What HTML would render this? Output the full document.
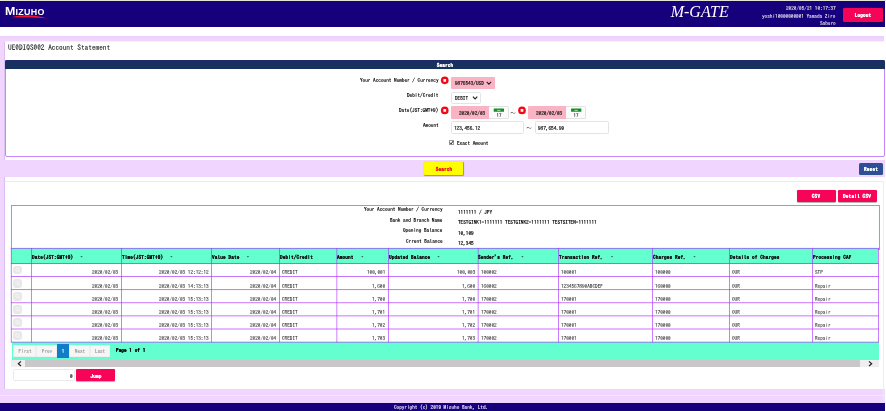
<!DOCTYPE html>
<html lang="en"><head><meta charset="utf-8"><title>UE0DIQS002 Account Statement</title>
<style>
html,body{margin:0;padding:0;background:#fff;}
body{width:886px;height:411px;position:relative;overflow:hidden;font-family:"IPAGothic","Liberation Mono",monospace;}
#w{position:absolute;left:0;top:0;width:886px;height:411px;will-change:transform;}
.a{position:absolute;box-sizing:content-box;}
.t{white-space:pre;font-family:"IPAGothic","Liberation Mono",monospace;-webkit-text-stroke:0.17px currentColor;transform:rotate(0.02deg);}
svg{display:block;overflow:visible;}
</style></head><body><div id="w">
<div class="a" style="left:0.00px;top:0.00px;width:886.00px;height:1.00px;background:#e4e4d6;"></div>
<div class="a" style="left:0.00px;top:1.00px;width:885.00px;height:25.80px;background:#17007c;"></div>
<div class="a" style="left:5.1px;top:4.8px;color:#fff;font-family:'Liberation Sans',sans-serif;font-weight:bold;font-size:8.9px;line-height:12px;letter-spacing:0.34px;white-space:pre"><span style="font-size:11.3px;display:inline-block;transform:scaleX(1.1);transform-origin:0 50%;margin-right:0.55px">M</span>IZUHO</div>
<svg class="a" style="left:10px;top:13px" width="40" height="9" viewBox="-1.20 -1.10 40 9"><path d="M0.3 3.1 C 9 0.3, 23 0.0, 36 4.4 C 23 3.0, 10 3.3, 0.3 3.1 Z" fill="#f0103a"/></svg>
<div class="a" style="left:670.7px;top:2.4px;color:#fff;font-family:'Liberation Serif',serif;font-style:italic;font-size:16px;line-height:19px;white-space:pre">M-GATE</div>
<div class="a t " style="top:4.63px;font-size:5.24px;line-height:6.24px;color:#fff;right:50.60px;-webkit-text-stroke:0.06px #fff;">2020/05/21 10:17:37</div>
<div class="a t " style="top:12.63px;font-size:5.24px;line-height:6.24px;color:#fff;right:50.60px;-webkit-text-stroke:0.06px #fff;">yoshi10000000001 Yamada Ziro</div>
<div class="a t " style="top:20.43px;font-size:5.24px;line-height:6.24px;color:#fff;right:50.60px;-webkit-text-stroke:0.06px #fff;">Saburo</div>
<div class="a" style="left:843.30px;top:8.30px;width:39.40px;height:13.40px;background:#f70459;border-radius:1.2px;box-shadow:0 0.5px 0.8px rgba(0,0,0,.3);"></div>
<div class="a t " style="top:12.08px;font-size:5.24px;line-height:6.24px;color:#fff;font-weight:bold;-webkit-text-stroke:0.14px currentColor;letter-spacing:0.15px;left:763.00px;width:200px;text-align:center;">Logout</div>
<div class="a" style="left:0.00px;top:36.10px;width:884.00px;height:367.30px;background:#efd5ff;"></div>
<div class="a" style="left:882.00px;top:389.30px;width:3.00px;height:14.10px;background:#f1dcff;"></div>
<div class="a" style="left:4.60px;top:41.00px;width:880.40px;height:348.30px;background:#fff;"></div>
<div class="a" style="left:4.60px;top:41.00px;width:879.40px;height:1.00px;background:#f8eeff;"></div>
<div class="a" style="left:0.00px;top:36.00px;width:884.00px;height:2.00px;background:#ecd0fd;"></div>
<div class="a" style="left:4.10px;top:42.00px;width:0.60px;height:347.30px;background:#dcc0f2;"></div>
<div class="a" style="left:0.00px;top:395.00px;width:885.00px;height:1.00px;background:#f5e4ff;"></div>
<div class="a t " style="top:44.15px;font-size:7.3px;line-height:8.3px;color:#1a1a1a;left:7.80px;-webkit-text-stroke:0.1px #1a1a1a;">UE0DIQS002 Account Statement</div>
<div class="a" style="left:4.6px;top:60px;width:878.7px;height:95.4px;border:0.9px solid #c986fa;border-radius:2px;background:#fff;box-sizing:content-box"></div>
<div class="a" style="left:4.70px;top:60.00px;width:880.30px;height:8.60px;background:#16325d;border-radius:1.8px 1.8px 0 0;box-shadow:inset 0 0.6px 0 #2a1f80;"></div>
<div class="a t " style="top:61.78px;font-size:5.24px;line-height:6.24px;color:#fff;font-weight:bold;-webkit-text-stroke:0.14px currentColor;letter-spacing:0.12px;left:344.90px;width:200px;text-align:center;">Search</div>
<div class="a t " style="top:76.68px;font-size:5.24px;line-height:6.24px;color:#000;right:447.00px;">Your Account Number / Currency</div>
<div class="a t " style="top:92.08px;font-size:5.24px;line-height:6.24px;color:#000;right:447.50px;">Debit/Credit</div>
<div class="a t " style="top:107.08px;font-size:5.24px;line-height:6.24px;color:#000;right:447.60px;">Date(JST:GMT+9)</div>
<div class="a t " style="top:121.88px;font-size:5.24px;line-height:6.24px;color:#000;right:447.60px;">Amount</div>
<svg class="a" style="left:439px;top:75px" width="11" height="11" viewBox="-1.75 -1.30 11 11"><circle cx="4" cy="4" r="3.85" fill="#f00a14"/><rect x="2.65" y="2.65" width="2.7" height="2.7" rx="0.3" fill="#fff"/></svg>
<svg class="a" style="left:439px;top:105px" width="11" height="11" viewBox="-1.75 -1.45 11 11"><circle cx="4" cy="4" r="3.85" fill="#f00a14"/><rect x="2.65" y="2.65" width="2.7" height="2.7" rx="0.3" fill="#fff"/></svg>
<svg class="a" style="left:517px;top:105px" width="10" height="11" viewBox="-1.00 -1.45 10 11"><circle cx="4" cy="4" r="3.85" fill="#f00a14"/><rect x="2.65" y="2.65" width="2.7" height="2.7" rx="0.3" fill="#fff"/></svg>
<div class="a" style="left:451.20px;top:76.80px;width:43.60px;height:12.20px;background:#f9b3c3;border-radius:1px;"></div>
<div class="a t " style="top:79.98px;font-size:5.24px;line-height:6.24px;color:#111;left:455.00px;">9876543/USD</div>
<svg class="a" style="left:485px;top:80px" width="8" height="7" viewBox="-1.20 -1.10 8 7"><path d="M0.5 0.7 L2.7 3 L4.9 0.7" fill="none" stroke="#222" stroke-width="1.1"/></svg>
<div class="a" style="box-sizing:border-box;left:451.20px;top:91.50px;width:30.10px;height:12.70px;border:1px solid #e4e4e4;background:#fff;border-radius:1.5px;"></div>
<div class="a t " style="top:94.88px;font-size:5.24px;line-height:6.24px;color:#111;left:455.00px;">DEBIT</div>
<svg class="a" style="left:471px;top:95px" width="8" height="6" viewBox="-1.40 -1.00 8 6"><path d="M0.5 0.7 L2.7 3 L4.9 0.7" fill="none" stroke="#222" stroke-width="1.1"/></svg>
<div class="a" style="left:451.20px;top:106.40px;width:37.70px;height:12.70px;background:#f9b3c3;border-radius:1px 0 0 1px;"></div>
<div class="a t " style="top:109.98px;font-size:5.24px;line-height:6.24px;color:#111;right:400.70px;">2020/02/03</div>
<div class="a" style="box-sizing:border-box;left:488.90px;top:106.40px;width:19.70px;height:12.90px;border:1px solid #e2e2e2;background:#fbfbfb;border-left:none;border-radius:0 1.5px 1.5px 0;"></div>
<svg class="a" style="left:492px;top:107px" width="13" height="6" viewBox="-1.70 -1.60 13 6"><rect x="0" y="0" width="10.3" height="3.1" rx="0.3" fill="#128f22"/><rect x="3.4" y="1.3" width="3.4" height="0.8" fill="#d4f0d8"/></svg>
<div class="a t " style="top:112.65px;font-size:4.9px;line-height:5.9px;color:#333;font-weight:bold;-webkit-text-stroke:0.14px currentColor;left:398.80px;width:200px;text-align:center;-webkit-text-stroke:0;">17</div>
<div class="a t " style="top:109.50px;font-size:5.6px;line-height:6.6px;color:#222;left:413.40px;width:200px;text-align:center;">～</div>
<div class="a" style="left:527.80px;top:106.40px;width:38.60px;height:12.70px;background:#f9b3c3;border-radius:1px 0 0 1px;"></div>
<div class="a t " style="top:109.98px;font-size:5.24px;line-height:6.24px;color:#111;right:323.60px;">2020/02/03</div>
<div class="a" style="box-sizing:border-box;left:566.40px;top:106.40px;width:19.40px;height:12.90px;border:1px solid #e2e2e2;background:#fbfbfb;border-left:none;border-radius:0 1.5px 1.5px 0;"></div>
<svg class="a" style="left:570px;top:107px" width="13" height="6" viewBox="-1.05 -1.60 13 6"><rect x="0" y="0" width="10.3" height="3.1" rx="0.3" fill="#128f22"/><rect x="3.4" y="1.3" width="3.4" height="0.8" fill="#d4f0d8"/></svg>
<div class="a t " style="top:112.65px;font-size:4.9px;line-height:5.9px;color:#333;font-weight:bold;-webkit-text-stroke:0.14px currentColor;left:476.15px;width:200px;text-align:center;-webkit-text-stroke:0;">17</div>
<div class="a" style="box-sizing:border-box;left:451.10px;top:121.30px;width:72.80px;height:13.20px;border:1px solid #e4e4e4;background:#fff;border-radius:1.5px;"></div>
<div class="a t " style="top:124.58px;font-size:5.24px;line-height:6.24px;color:#111;left:454.10px;">123,456.12</div>
<div class="a t " style="top:124.70px;font-size:5.6px;line-height:6.6px;color:#222;left:428.90px;width:200px;text-align:center;">～</div>
<div class="a" style="box-sizing:border-box;left:535.20px;top:121.30px;width:73.40px;height:13.20px;border:1px solid #e4e4e4;background:#fff;border-radius:1.5px;"></div>
<div class="a t " style="top:124.58px;font-size:5.24px;line-height:6.24px;color:#111;left:538.10px;">987,654.99</div>
<div class="a" style="box-sizing:border-box;left:448.90px;top:140.20px;width:5.00px;height:5.10px;border:1px solid #9a9a9a;background:#fff;"></div>
<svg class="a" style="left:448px;top:139px" width="7" height="7" viewBox="-1.20 -1.40 7 7"><path d="M0.8 2.3 L1.9 3.5 L3.9 0.7" fill="none" stroke="#111" stroke-width="0.95"/></svg>
<div class="a t " style="top:139.88px;font-size:5.24px;line-height:6.24px;color:#000;left:456.80px;">Exact Amount</div>
<div class="a" style="left:4.60px;top:160.00px;width:880.40px;height:16.50px;background:#efd5ff;"></div>
<div class="a" style="left:0.00px;top:160.00px;width:4.60px;height:16.50px;background:#efd5ff;"></div>
<div class="a" style="left:424.30px;top:162.20px;width:39.20px;height:12.50px;background:#ffff00;border-radius:1px;box-shadow:0.4px 0.6px 0.8px rgba(120,110,0,.6);"></div>
<div class="a t " style="top:166.08px;font-size:5.24px;line-height:6.24px;color:#f0141e;font-weight:bold;-webkit-text-stroke:0.14px currentColor;letter-spacing:0.12px;left:344.30px;width:200px;text-align:center;">Search</div>
<div class="a" style="left:859.30px;top:162.60px;width:23.80px;height:12.40px;background:#2d4f93;border-radius:1.5px;"></div>
<div class="a t " style="top:165.88px;font-size:5.24px;line-height:6.24px;color:#fff;font-weight:bold;-webkit-text-stroke:0.14px currentColor;letter-spacing:0.15px;left:771.30px;width:200px;text-align:center;">Reset</div>
<div class="a" style="left:4.60px;top:180.60px;width:878.80px;height:0.70px;background:#ececec;"></div>
<div class="a" style="left:883.30px;top:181.00px;width:0.60px;height:208.30px;background:#efefef;"></div>
<div class="a" style="left:796.50px;top:189.50px;width:39.30px;height:12.40px;background:#f70459;border-radius:1.2px;box-shadow:0 0.5px 0.8px rgba(0,0,0,.3);"></div>
<div class="a t " style="top:192.88px;font-size:5.24px;line-height:6.24px;color:#fff;font-weight:bold;-webkit-text-stroke:0.14px currentColor;letter-spacing:0.18px;left:716.30px;width:200px;text-align:center;">CSV</div>
<div class="a" style="left:837.50px;top:189.50px;width:39.30px;height:12.40px;background:#f70459;border-radius:1.2px;box-shadow:0 0.5px 0.8px rgba(0,0,0,.3);"></div>
<div class="a t " style="top:192.88px;font-size:5.24px;line-height:6.24px;color:#fff;font-weight:bold;-webkit-text-stroke:0.14px currentColor;letter-spacing:0.18px;left:757.30px;width:200px;text-align:center;">Detail CSV</div>
<div class="a" style="left:10.7px;top:204.7px;width:866.9px;height:43px;border:0.9px solid #c97cf9;background:#fff"></div>
<div class="a t " style="top:206.08px;font-size:5.24px;line-height:6.24px;color:#000;right:443.80px;">Your Account Number / Currency</div>
<div class="a t " style="top:208.78px;font-size:5.24px;line-height:6.24px;color:#000;left:458.40px;">1111111 / JPY</div>
<div class="a t " style="top:216.64px;font-size:5.24px;line-height:6.24px;color:#000;right:443.80px;">Bank and Branch Name</div>
<div class="a t " style="top:219.34px;font-size:5.24px;line-height:6.24px;color:#000;left:458.40px;">TESTGINK1-1111111 TESTGINK2-1111111 TESTSITEN-1111111</div>
<div class="a t " style="top:227.20px;font-size:5.24px;line-height:6.24px;color:#000;right:443.80px;">Opening Balance</div>
<div class="a t " style="top:229.90px;font-size:5.24px;line-height:6.24px;color:#000;left:458.40px;">10,109</div>
<div class="a t " style="top:237.76px;font-size:5.24px;line-height:6.24px;color:#000;right:443.80px;">Crrent Balance</div>
<div class="a t " style="top:240.46px;font-size:5.24px;line-height:6.24px;color:#000;left:458.40px;">12,345</div>
<div class="a" style="left:11.20px;top:248.25px;width:867.30px;height:15.30px;background:#63ffce;"></div>
<div class="a" style="left:11.50px;top:342.00px;width:867.60px;height:17.80px;background:#63ffce;"></div>
<svg class="a" style="left:0;top:240px" width="886" height="110" viewBox="0 240 886 110"><rect x="10.95" y="247.93" width="867.80" height="0.64" fill="#a828ff"/><rect x="10.95" y="263.23" width="867.80" height="0.64" fill="#a828ff"/><rect x="10.95" y="276.32" width="867.80" height="0.64" fill="#a828ff"/><rect x="10.95" y="289.41" width="867.80" height="0.64" fill="#a828ff"/><rect x="10.95" y="302.50" width="867.80" height="0.64" fill="#a828ff"/><rect x="10.95" y="315.59" width="867.80" height="0.64" fill="#a828ff"/><rect x="10.95" y="328.68" width="867.80" height="0.64" fill="#a828ff"/><rect x="10.95" y="341.77" width="867.80" height="0.64" fill="#a828ff"/><rect x="10.90" y="248.00" width="0.6" height="94.34" fill="#a828ff"/><rect x="31.30" y="248.00" width="0.6" height="94.34" fill="#a828ff"/><rect x="121.30" y="248.00" width="0.6" height="94.34" fill="#a828ff"/><rect x="211.20" y="248.00" width="0.6" height="94.34" fill="#a828ff"/><rect x="279.30" y="248.00" width="0.6" height="94.34" fill="#a828ff"/><rect x="336.60" y="248.00" width="0.6" height="94.34" fill="#a828ff"/><rect x="388.30" y="248.00" width="0.6" height="94.34" fill="#a828ff"/><rect x="477.80" y="248.00" width="0.6" height="94.34" fill="#a828ff"/><rect x="558.30" y="248.00" width="0.6" height="94.34" fill="#a828ff"/><rect x="652.40" y="248.00" width="0.6" height="94.34" fill="#a828ff"/><rect x="729.40" y="248.00" width="0.6" height="94.34" fill="#a828ff"/><rect x="812.20" y="248.00" width="0.6" height="94.34" fill="#a828ff"/><rect x="878.20" y="248.00" width="0.6" height="94.34" fill="#a828ff"/></svg>
<div class="a t " style="top:253.58px;font-size:5.24px;line-height:6.24px;color:#111;font-weight:bold;-webkit-text-stroke:0.14px currentColor;letter-spacing:0.13px;left:31.90px;">Date(JST:GMT+9)</div>
<svg class="a" style="left:79px;top:255px" width="5" height="4" viewBox="-1.40 -1.00 5 4"><path d="M0 0 L2.4 0 L1.2 1.5 Z" fill="#3a6a5a"/></svg>
<div class="a t " style="top:253.58px;font-size:5.24px;line-height:6.24px;color:#111;font-weight:bold;-webkit-text-stroke:0.14px currentColor;letter-spacing:0.13px;left:121.90px;">Time(JST:GMT+9)</div>
<svg class="a" style="left:169px;top:255px" width="5" height="4" viewBox="-1.20 -1.00 5 4"><path d="M0 0 L2.4 0 L1.2 1.5 Z" fill="#3a6a5a"/></svg>
<div class="a t " style="top:253.58px;font-size:5.24px;line-height:6.24px;color:#111;font-weight:bold;-webkit-text-stroke:0.14px currentColor;letter-spacing:0.13px;left:211.80px;">Value Date</div>
<svg class="a" style="left:245px;top:255px" width="6" height="4" viewBox="-1.70 -1.00 6 4"><path d="M0 0 L2.4 0 L1.2 1.5 Z" fill="#3a6a5a"/></svg>
<div class="a t " style="top:253.58px;font-size:5.24px;line-height:6.24px;color:#111;font-weight:bold;-webkit-text-stroke:0.14px currentColor;letter-spacing:0.13px;left:279.90px;">Debit/Credit</div>
<div class="a t " style="top:253.58px;font-size:5.24px;line-height:6.24px;color:#111;font-weight:bold;-webkit-text-stroke:0.14px currentColor;letter-spacing:0.13px;left:337.20px;">Amount</div>
<svg class="a" style="left:360px;top:255px" width="5" height="4" viewBox="-1.10 -1.00 5 4"><path d="M0 0 L2.4 0 L1.2 1.5 Z" fill="#3a6a5a"/></svg>
<div class="a t " style="top:253.58px;font-size:5.24px;line-height:6.24px;color:#111;font-weight:bold;-webkit-text-stroke:0.14px currentColor;letter-spacing:0.13px;left:388.90px;">Updated Balance</div>
<svg class="a" style="left:436px;top:255px" width="5" height="4" viewBox="-1.30 -1.00 5 4"><path d="M0 0 L2.4 0 L1.2 1.5 Z" fill="#3a6a5a"/></svg>
<div class="a t " style="top:253.58px;font-size:5.24px;line-height:6.24px;color:#111;font-weight:bold;-webkit-text-stroke:0.14px currentColor;letter-spacing:0.13px;left:478.40px;">Sender's Ref.</div>
<svg class="a" style="left:520px;top:255px" width="5" height="4" viewBox="-1.20 -1.00 5 4"><path d="M0 0 L2.4 0 L1.2 1.5 Z" fill="#3a6a5a"/></svg>
<div class="a t " style="top:253.58px;font-size:5.24px;line-height:6.24px;color:#111;font-weight:bold;-webkit-text-stroke:0.14px currentColor;letter-spacing:0.13px;left:558.90px;">Transaction Ref.</div>
<svg class="a" style="left:609px;top:255px" width="6" height="4" viewBox="-1.80 -1.00 6 4"><path d="M0 0 L2.4 0 L1.2 1.5 Z" fill="#3a6a5a"/></svg>
<div class="a t " style="top:253.58px;font-size:5.24px;line-height:6.24px;color:#111;font-weight:bold;-webkit-text-stroke:0.14px currentColor;letter-spacing:0.13px;left:653.00px;">Charges Ref.</div>
<svg class="a" style="left:692px;top:255px" width="5" height="4" viewBox="-1.30 -1.00 5 4"><path d="M0 0 L2.4 0 L1.2 1.5 Z" fill="#3a6a5a"/></svg>
<div class="a t " style="top:253.58px;font-size:5.24px;line-height:6.24px;color:#111;font-weight:bold;-webkit-text-stroke:0.14px currentColor;letter-spacing:0.13px;left:730.00px;">Details of Charges</div>
<div class="a t " style="top:253.58px;font-size:5.24px;line-height:6.24px;color:#111;font-weight:bold;-webkit-text-stroke:0.14px currentColor;letter-spacing:0.13px;left:812.80px;">Processing CAF</div>
<div class="a" style="left:13.4px;top:265.90px;width:9.1px;height:8.6px;border-radius:3px;background:#e8e8e8"></div>
<svg class="a" style="left:14px;top:266px" width="8" height="9" viewBox="-1.00 -1.30 8 9"><circle cx="2.4" cy="2.4" r="1.6" fill="none" stroke="#f8f8f8" stroke-width="0.8"/><path d="M3.6 3.6 L5.2 5.2" stroke="#f8f8f8" stroke-width="0.9"/></svg>
<div class="a t " style="top:269.48px;font-size:5.24px;line-height:6.24px;color:#1c1c1c;right:767.50px;-webkit-text-stroke:0.05px #1c1c1c;">2020/02/03</div>
<div class="a t " style="top:269.48px;font-size:5.24px;line-height:6.24px;color:#1c1c1c;right:677.60px;-webkit-text-stroke:0.05px #1c1c1c;">2020/02/03 12:12:12</div>
<div class="a t " style="top:269.48px;font-size:5.24px;line-height:6.24px;color:#1c1c1c;right:609.50px;-webkit-text-stroke:0.05px #1c1c1c;">2020/02/04</div>
<div class="a t " style="top:269.48px;font-size:5.24px;line-height:6.24px;color:#1c1c1c;left:282.35px;-webkit-text-stroke:0.05px #1c1c1c;">CREDIT</div>
<div class="a t " style="top:269.48px;font-size:5.24px;line-height:6.24px;color:#1c1c1c;right:500.50px;-webkit-text-stroke:0.05px #1c1c1c;">100,001</div>
<div class="a t " style="top:269.48px;font-size:5.24px;line-height:6.24px;color:#1c1c1c;right:411.00px;-webkit-text-stroke:0.05px #1c1c1c;">100,003</div>
<div class="a t " style="top:269.48px;font-size:5.24px;line-height:6.24px;color:#1c1c1c;left:480.85px;-webkit-text-stroke:0.05px #1c1c1c;">100002</div>
<div class="a t " style="top:269.48px;font-size:5.24px;line-height:6.24px;color:#1c1c1c;left:561.35px;-webkit-text-stroke:0.05px #1c1c1c;">100001</div>
<div class="a t " style="top:269.48px;font-size:5.24px;line-height:6.24px;color:#1c1c1c;left:655.45px;-webkit-text-stroke:0.05px #1c1c1c;">100000</div>
<div class="a t " style="top:269.48px;font-size:5.24px;line-height:6.24px;color:#1c1c1c;left:732.45px;-webkit-text-stroke:0.05px #1c1c1c;">OUR</div>
<div class="a t " style="top:269.48px;font-size:5.24px;line-height:6.24px;color:#1c1c1c;left:815.25px;-webkit-text-stroke:0.05px #1c1c1c;">STP</div>
<div class="a" style="left:13.4px;top:278.99px;width:9.1px;height:8.6px;border-radius:3px;background:#e8e8e8"></div>
<svg class="a" style="left:14px;top:279px" width="8" height="9" viewBox="-1.00 -1.38 8 9"><circle cx="2.4" cy="2.4" r="1.6" fill="none" stroke="#f8f8f8" stroke-width="0.8"/><path d="M3.6 3.6 L5.2 5.2" stroke="#f8f8f8" stroke-width="0.9"/></svg>
<div class="a t " style="top:282.56px;font-size:5.24px;line-height:6.24px;color:#1c1c1c;right:767.50px;-webkit-text-stroke:0.05px #1c1c1c;">2020/02/03</div>
<div class="a t " style="top:282.56px;font-size:5.24px;line-height:6.24px;color:#1c1c1c;right:677.60px;-webkit-text-stroke:0.05px #1c1c1c;">2020/02/03 14:13:13</div>
<div class="a t " style="top:282.56px;font-size:5.24px;line-height:6.24px;color:#1c1c1c;right:609.50px;-webkit-text-stroke:0.05px #1c1c1c;">2020/02/04</div>
<div class="a t " style="top:282.56px;font-size:5.24px;line-height:6.24px;color:#1c1c1c;left:282.35px;-webkit-text-stroke:0.05px #1c1c1c;">CREDIT</div>
<div class="a t " style="top:282.56px;font-size:5.24px;line-height:6.24px;color:#1c1c1c;right:500.50px;-webkit-text-stroke:0.05px #1c1c1c;">1,600</div>
<div class="a t " style="top:282.56px;font-size:5.24px;line-height:6.24px;color:#1c1c1c;right:411.00px;-webkit-text-stroke:0.05px #1c1c1c;">1,600</div>
<div class="a t " style="top:282.56px;font-size:5.24px;line-height:6.24px;color:#1c1c1c;left:480.85px;-webkit-text-stroke:0.05px #1c1c1c;">160002</div>
<div class="a t " style="top:282.56px;font-size:5.24px;line-height:6.24px;color:#1c1c1c;left:561.35px;-webkit-text-stroke:0.05px #1c1c1c;">1234567890ABCDEF</div>
<div class="a t " style="top:282.56px;font-size:5.24px;line-height:6.24px;color:#1c1c1c;left:655.45px;-webkit-text-stroke:0.05px #1c1c1c;">160000</div>
<div class="a t " style="top:282.56px;font-size:5.24px;line-height:6.24px;color:#1c1c1c;left:732.45px;-webkit-text-stroke:0.05px #1c1c1c;">OUR</div>
<div class="a t " style="top:282.56px;font-size:5.24px;line-height:6.24px;color:#1c1c1c;left:815.25px;-webkit-text-stroke:0.05px #1c1c1c;">Repair</div>
<div class="a" style="left:13.4px;top:292.07px;width:9.1px;height:8.6px;border-radius:3px;background:#e8e8e8"></div>
<svg class="a" style="left:14px;top:292px" width="8" height="9" viewBox="-1.00 -1.47 8 9"><circle cx="2.4" cy="2.4" r="1.6" fill="none" stroke="#f8f8f8" stroke-width="0.8"/><path d="M3.6 3.6 L5.2 5.2" stroke="#f8f8f8" stroke-width="0.9"/></svg>
<div class="a t " style="top:295.65px;font-size:5.24px;line-height:6.24px;color:#1c1c1c;right:767.50px;-webkit-text-stroke:0.05px #1c1c1c;">2020/02/03</div>
<div class="a t " style="top:295.65px;font-size:5.24px;line-height:6.24px;color:#1c1c1c;right:677.60px;-webkit-text-stroke:0.05px #1c1c1c;">2020/02/03 15:13:13</div>
<div class="a t " style="top:295.65px;font-size:5.24px;line-height:6.24px;color:#1c1c1c;right:609.50px;-webkit-text-stroke:0.05px #1c1c1c;">2020/02/04</div>
<div class="a t " style="top:295.65px;font-size:5.24px;line-height:6.24px;color:#1c1c1c;left:282.35px;-webkit-text-stroke:0.05px #1c1c1c;">CREDIT</div>
<div class="a t " style="top:295.65px;font-size:5.24px;line-height:6.24px;color:#1c1c1c;right:500.50px;-webkit-text-stroke:0.05px #1c1c1c;">1,700</div>
<div class="a t " style="top:295.65px;font-size:5.24px;line-height:6.24px;color:#1c1c1c;right:411.00px;-webkit-text-stroke:0.05px #1c1c1c;">1,700</div>
<div class="a t " style="top:295.65px;font-size:5.24px;line-height:6.24px;color:#1c1c1c;left:480.85px;-webkit-text-stroke:0.05px #1c1c1c;">170002</div>
<div class="a t " style="top:295.65px;font-size:5.24px;line-height:6.24px;color:#1c1c1c;left:561.35px;-webkit-text-stroke:0.05px #1c1c1c;">170001</div>
<div class="a t " style="top:295.65px;font-size:5.24px;line-height:6.24px;color:#1c1c1c;left:655.45px;-webkit-text-stroke:0.05px #1c1c1c;">170000</div>
<div class="a t " style="top:295.65px;font-size:5.24px;line-height:6.24px;color:#1c1c1c;left:732.45px;-webkit-text-stroke:0.05px #1c1c1c;">OUR</div>
<div class="a t " style="top:295.65px;font-size:5.24px;line-height:6.24px;color:#1c1c1c;left:815.25px;-webkit-text-stroke:0.05px #1c1c1c;">Repair</div>
<div class="a" style="left:13.4px;top:305.17px;width:9.1px;height:8.6px;border-radius:3px;background:#e8e8e8"></div>
<svg class="a" style="left:14px;top:305px" width="8" height="9" viewBox="-1.00 -1.56 8 9"><circle cx="2.4" cy="2.4" r="1.6" fill="none" stroke="#f8f8f8" stroke-width="0.8"/><path d="M3.6 3.6 L5.2 5.2" stroke="#f8f8f8" stroke-width="0.9"/></svg>
<div class="a t " style="top:308.75px;font-size:5.24px;line-height:6.24px;color:#1c1c1c;right:767.50px;-webkit-text-stroke:0.05px #1c1c1c;">2020/02/03</div>
<div class="a t " style="top:308.75px;font-size:5.24px;line-height:6.24px;color:#1c1c1c;right:677.60px;-webkit-text-stroke:0.05px #1c1c1c;">2020/02/03 15:13:13</div>
<div class="a t " style="top:308.75px;font-size:5.24px;line-height:6.24px;color:#1c1c1c;right:609.50px;-webkit-text-stroke:0.05px #1c1c1c;">2020/02/04</div>
<div class="a t " style="top:308.75px;font-size:5.24px;line-height:6.24px;color:#1c1c1c;left:282.35px;-webkit-text-stroke:0.05px #1c1c1c;">CREDIT</div>
<div class="a t " style="top:308.75px;font-size:5.24px;line-height:6.24px;color:#1c1c1c;right:500.50px;-webkit-text-stroke:0.05px #1c1c1c;">1,701</div>
<div class="a t " style="top:308.75px;font-size:5.24px;line-height:6.24px;color:#1c1c1c;right:411.00px;-webkit-text-stroke:0.05px #1c1c1c;">1,701</div>
<div class="a t " style="top:308.75px;font-size:5.24px;line-height:6.24px;color:#1c1c1c;left:480.85px;-webkit-text-stroke:0.05px #1c1c1c;">170002</div>
<div class="a t " style="top:308.75px;font-size:5.24px;line-height:6.24px;color:#1c1c1c;left:561.35px;-webkit-text-stroke:0.05px #1c1c1c;">170001</div>
<div class="a t " style="top:308.75px;font-size:5.24px;line-height:6.24px;color:#1c1c1c;left:655.45px;-webkit-text-stroke:0.05px #1c1c1c;">170000</div>
<div class="a t " style="top:308.75px;font-size:5.24px;line-height:6.24px;color:#1c1c1c;left:732.45px;-webkit-text-stroke:0.05px #1c1c1c;">OUR</div>
<div class="a t " style="top:308.75px;font-size:5.24px;line-height:6.24px;color:#1c1c1c;left:815.25px;-webkit-text-stroke:0.05px #1c1c1c;">Repair</div>
<div class="a" style="left:13.4px;top:318.26px;width:9.1px;height:8.6px;border-radius:3px;background:#e8e8e8"></div>
<svg class="a" style="left:14px;top:318px" width="8" height="9" viewBox="-1.00 -1.66 8 9"><circle cx="2.4" cy="2.4" r="1.6" fill="none" stroke="#f8f8f8" stroke-width="0.8"/><path d="M3.6 3.6 L5.2 5.2" stroke="#f8f8f8" stroke-width="0.9"/></svg>
<div class="a t " style="top:321.84px;font-size:5.24px;line-height:6.24px;color:#1c1c1c;right:767.50px;-webkit-text-stroke:0.05px #1c1c1c;">2020/02/03</div>
<div class="a t " style="top:321.84px;font-size:5.24px;line-height:6.24px;color:#1c1c1c;right:677.60px;-webkit-text-stroke:0.05px #1c1c1c;">2020/02/03 15:13:13</div>
<div class="a t " style="top:321.84px;font-size:5.24px;line-height:6.24px;color:#1c1c1c;right:609.50px;-webkit-text-stroke:0.05px #1c1c1c;">2020/02/04</div>
<div class="a t " style="top:321.84px;font-size:5.24px;line-height:6.24px;color:#1c1c1c;left:282.35px;-webkit-text-stroke:0.05px #1c1c1c;">CREDIT</div>
<div class="a t " style="top:321.84px;font-size:5.24px;line-height:6.24px;color:#1c1c1c;right:500.50px;-webkit-text-stroke:0.05px #1c1c1c;">1,702</div>
<div class="a t " style="top:321.84px;font-size:5.24px;line-height:6.24px;color:#1c1c1c;right:411.00px;-webkit-text-stroke:0.05px #1c1c1c;">1,702</div>
<div class="a t " style="top:321.84px;font-size:5.24px;line-height:6.24px;color:#1c1c1c;left:480.85px;-webkit-text-stroke:0.05px #1c1c1c;">170002</div>
<div class="a t " style="top:321.84px;font-size:5.24px;line-height:6.24px;color:#1c1c1c;left:561.35px;-webkit-text-stroke:0.05px #1c1c1c;">170001</div>
<div class="a t " style="top:321.84px;font-size:5.24px;line-height:6.24px;color:#1c1c1c;left:655.45px;-webkit-text-stroke:0.05px #1c1c1c;">170000</div>
<div class="a t " style="top:321.84px;font-size:5.24px;line-height:6.24px;color:#1c1c1c;left:732.45px;-webkit-text-stroke:0.05px #1c1c1c;">OUR</div>
<div class="a t " style="top:321.84px;font-size:5.24px;line-height:6.24px;color:#1c1c1c;left:815.25px;-webkit-text-stroke:0.05px #1c1c1c;">Repair</div>
<div class="a" style="left:13.4px;top:331.34px;width:9.1px;height:8.6px;border-radius:3px;background:#e8e8e8"></div>
<svg class="a" style="left:14px;top:331px" width="8" height="9" viewBox="-1.00 -1.74 8 9"><circle cx="2.4" cy="2.4" r="1.6" fill="none" stroke="#f8f8f8" stroke-width="0.8"/><path d="M3.6 3.6 L5.2 5.2" stroke="#f8f8f8" stroke-width="0.9"/></svg>
<div class="a t " style="top:334.92px;font-size:5.24px;line-height:6.24px;color:#1c1c1c;right:767.50px;-webkit-text-stroke:0.05px #1c1c1c;">2020/02/03</div>
<div class="a t " style="top:334.92px;font-size:5.24px;line-height:6.24px;color:#1c1c1c;right:677.60px;-webkit-text-stroke:0.05px #1c1c1c;">2020/02/03 15:13:13</div>
<div class="a t " style="top:334.92px;font-size:5.24px;line-height:6.24px;color:#1c1c1c;right:609.50px;-webkit-text-stroke:0.05px #1c1c1c;">2020/02/04</div>
<div class="a t " style="top:334.92px;font-size:5.24px;line-height:6.24px;color:#1c1c1c;left:282.35px;-webkit-text-stroke:0.05px #1c1c1c;">CREDIT</div>
<div class="a t " style="top:334.92px;font-size:5.24px;line-height:6.24px;color:#1c1c1c;right:500.50px;-webkit-text-stroke:0.05px #1c1c1c;">1,703</div>
<div class="a t " style="top:334.92px;font-size:5.24px;line-height:6.24px;color:#1c1c1c;right:411.00px;-webkit-text-stroke:0.05px #1c1c1c;">1,703</div>
<div class="a t " style="top:334.92px;font-size:5.24px;line-height:6.24px;color:#1c1c1c;left:480.85px;-webkit-text-stroke:0.05px #1c1c1c;">170002</div>
<div class="a t " style="top:334.92px;font-size:5.24px;line-height:6.24px;color:#1c1c1c;left:561.35px;-webkit-text-stroke:0.05px #1c1c1c;">170001</div>
<div class="a t " style="top:334.92px;font-size:5.24px;line-height:6.24px;color:#1c1c1c;left:655.45px;-webkit-text-stroke:0.05px #1c1c1c;">170000</div>
<div class="a t " style="top:334.92px;font-size:5.24px;line-height:6.24px;color:#1c1c1c;left:732.45px;-webkit-text-stroke:0.05px #1c1c1c;">OUR</div>
<div class="a t " style="top:334.92px;font-size:5.24px;line-height:6.24px;color:#1c1c1c;left:815.25px;-webkit-text-stroke:0.05px #1c1c1c;">Repair</div>
<div class="a" style="left:13.30px;top:344.60px;width:22.80px;height:12.80px;background:#f6f6f6;box-shadow:inset 0 0 0 0.5px #e6e6e6;"></div>
<div class="a t " style="top:348.18px;font-size:5.24px;line-height:6.24px;color:#9c9c9c;left:-75.30px;width:200px;text-align:center;">First</div>
<div class="a" style="left:36.10px;top:344.60px;width:20.80px;height:12.80px;background:#f6f6f6;box-shadow:inset 0 0 0 0.5px #e6e6e6;"></div>
<div class="a t " style="top:348.18px;font-size:5.24px;line-height:6.24px;color:#9c9c9c;left:-53.50px;width:200px;text-align:center;">Prev</div>
<div class="a" style="left:56.90px;top:344.20px;width:12.40px;height:13.40px;background:#0f7dc8;"></div>
<div class="a t " style="top:348.18px;font-size:5.24px;line-height:6.24px;color:#fff;left:-36.90px;width:200px;text-align:center;">1</div>
<div class="a" style="left:69.30px;top:344.60px;width:20.70px;height:12.80px;background:#f6f6f6;box-shadow:inset 0 0 0 0.5px #e6e6e6;"></div>
<div class="a t " style="top:348.18px;font-size:5.24px;line-height:6.24px;color:#9c9c9c;left:-20.35px;width:200px;text-align:center;">Next</div>
<div class="a" style="left:90.00px;top:344.60px;width:20.40px;height:12.80px;background:#f6f6f6;box-shadow:inset 0 0 0 0.5px #e6e6e6;"></div>
<div class="a t " style="top:348.18px;font-size:5.24px;line-height:6.24px;color:#9c9c9c;left:0.20px;width:200px;text-align:center;">Last</div>
<div class="a t " style="top:347.08px;font-size:5.24px;line-height:6.24px;color:#000;font-weight:bold;-webkit-text-stroke:0.14px currentColor;letter-spacing:0.05px;left:115.90px;">Page 1 of 1</div>
<div class="a" style="left:11.00px;top:360.20px;width:868.10px;height:6.60px;background:#eeeeee;"></div>
<div class="a" style="left:24.60px;top:360.20px;width:835.30px;height:6.60px;background:#c9c7c9;"></div>
<svg class="a" style="left:16px;top:359px" width="7" height="9" viewBox="-1.40 -1.90 7 9"><path d="M3.6 0.5 L0.9 2.8 L3.6 5.1" fill="none" stroke="#222" stroke-width="1.15"/></svg>
<svg class="a" style="left:867px;top:359px" width="7" height="9" viewBox="-1.20 -1.90 7 9"><path d="M0.8 0.5 L3.5 2.8 L0.8 5.1" fill="none" stroke="#222" stroke-width="1.15"/></svg>
<div class="a" style="box-sizing:border-box;left:12.90px;top:369.30px;width:62.20px;height:12.00px;border:1px solid #eaeaea;background:#fff;border-radius:1.5px;"></div>
<div class="a t " style="top:372.68px;font-size:5.24px;line-height:6.24px;color:#111;right:813.70px;">0</div>
<div class="a" style="left:75.90px;top:368.90px;width:39.40px;height:12.50px;background:#f70459;border-radius:1.2px;box-shadow:0 0.5px 0.8px rgba(0,0,0,.3);"></div>
<div class="a t " style="top:372.78px;font-size:5.24px;line-height:6.24px;color:#fff;font-weight:bold;-webkit-text-stroke:0.14px currentColor;letter-spacing:0.15px;left:-4.30px;width:200px;text-align:center;">Jump</div>
<div class="a" style="left:0.00px;top:403.20px;width:885.00px;height:7.80px;background:#17007c;"></div>
<div class="a t " style="top:403.88px;font-size:5.24px;line-height:6.24px;color:#e4def8;left:341.00px;width:200px;text-align:center;">Copyright (c) 2019 Mizuho Bank, Ltd.</div>
</div></body></html>
